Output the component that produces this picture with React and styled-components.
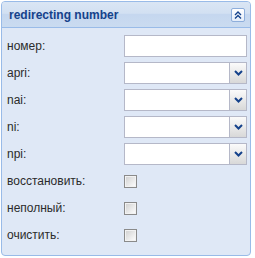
import React from "react";
import styled, { createGlobalStyle } from "styled-components";

const GlobalStyle = createGlobalStyle`
  html, body {
    margin: 0;
    padding: 0;
    background: #fff;
  }
  body {
    font-family: "Liberation Sans", Arial, sans-serif;
  }
`;

const fields = [
  { label: "номер:", kind: "text" },
  { label: "apri:", kind: "combo" },
  { label: "nai:", kind: "combo" },
  { label: "ni:", kind: "combo" },
  { label: "npi:", kind: "combo" },
  { label: "восстановить:", kind: "check" },
  { label: "неполный:", kind: "check" },
  { label: "очистить:", kind: "check" },
];

const ChevronDown = () => (
  <svg width="9" height="6" viewBox="0 0 9 6">
    <path d="M1 1 L4.5 4.5 L8 1" fill="none" stroke="#15428b" strokeWidth="2" />
  </svg>
);

const CollapseIcon = () => (
  <svg width="8" height="8" viewBox="0 0 8 8">
    <path d="M1 4 L4 1 L7 4 M1 7.5 L4 4.5 L7 7.5" fill="none" stroke="#15428b" strokeWidth="1.4" />
  </svg>
);

export default function App() {
  return (
    <>
      <GlobalStyle />
      <Panel>
        <Header>
          <Title>redirecting number</Title>
          <ToolButton>
            <CollapseIcon />
          </ToolButton>
        </Header>
        <Body>
          {fields.map((f) => (
            <Row key={f.label}>
              <Label>{f.label}</Label>
              {f.kind === "text" && <TextInput />}
              {f.kind === "combo" && (
                <Combo>
                  <ComboText />
                  <Trigger>
                    <ChevronDown />
                  </Trigger>
                </Combo>
              )}
              {f.kind === "check" && <CheckBox />}
            </Row>
          ))}
        </Body>
      </Panel>
    </>
  );
}

const Panel = styled.div`
  margin: 1px;
  width: 250px;
  height: 255px;
  box-sizing: border-box;
  border: 1px solid #99bbe8;
  border-radius: 4px;
  background: #dfe8f6;
  overflow: hidden;
  display: flex;
  flex-direction: column;
`;

const Header = styled.div`
  height: 26px;
  box-sizing: border-box;
  border-bottom: 1px solid #99bbe8;
  background: linear-gradient(#dae6f4 0%, #d2e0f2 45%, #c5d7ef 50%, #cadbf0 100%);
  display: flex;
  align-items: center;
  justify-content: space-between;
  padding: 0 5px 0 7px;
`;

const Title = styled.span`
  font-family: "Liberation Sans", Arial, sans-serif;
  font-size: 12px;
  font-weight: bold;
  color: #15428b;
`;

const ToolButton = styled.div`
  width: 12px;
  height: 12px;
  border: 1px solid #8eaedb;
  border-radius: 2px;
  background: linear-gradient(#ffffff, #e4edf9);
  display: flex;
  align-items: center;
  justify-content: center;
`;

const Body = styled.div`
  padding: 7px 3px 0 5px;
  display: flex;
  flex-direction: column;
  gap: 5px;
`;

const Row = styled.div`
  display: grid;
  grid-template-columns: 117px 123px;
  align-items: center;
  height: 22px;
`;

const Label = styled.span`
  font-family: "Liberation Sans", Arial, sans-serif;
  font-size: 12px;
  color: #2b2b2b;
`;

const TextInput = styled.div`
  height: 22px;
  box-sizing: border-box;
  border: 1px solid #b5b8c8;
  background: #fff;
`;

const Combo = styled.div`
  height: 22px;
  box-sizing: border-box;
  border: 1px solid #b5b8c8;
  background: #fff;
  display: flex;
`;

const ComboText = styled.div`
  flex: 1;
`;

const Trigger = styled.div`
  width: 16px;
  border-left: 1px solid #b5b8c8;
  background: linear-gradient(#fbfbfb, #d8d8d8);
  display: flex;
  align-items: center;
  justify-content: center;
`;

const CheckBox = styled.div`
  width: 13px;
  height: 13px;
  box-sizing: border-box;
  border: 1px solid #8a8a8a;
  background: linear-gradient(135deg, #cfcfcf, #ffffff);
  box-shadow: inset 0 0 0 1px #f2f2f2;
`;
